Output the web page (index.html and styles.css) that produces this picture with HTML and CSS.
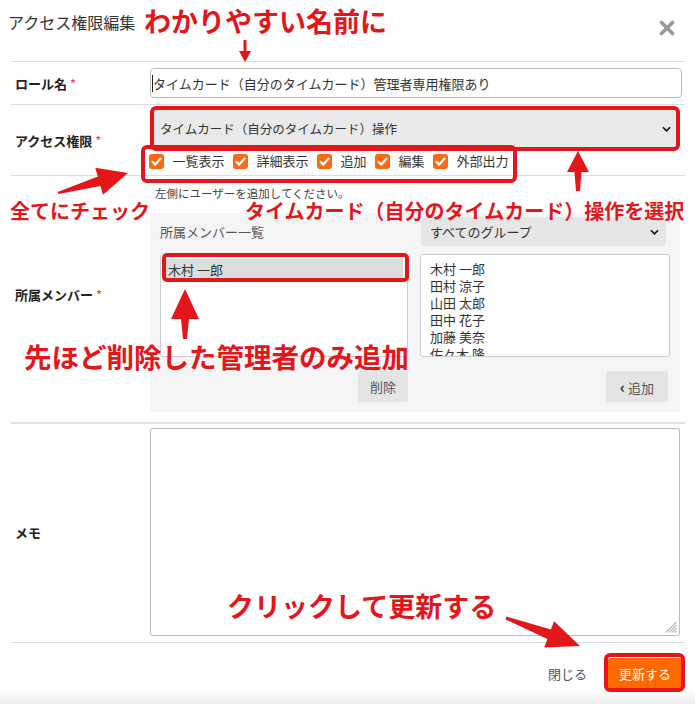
FILE: index.html
```html
<!DOCTYPE html>
<html lang="ja">
<head>
<meta charset="utf-8">
<title>アクセス権限編集</title>
<link rel="stylesheet" href="styles.css">
</head>
<body>
<div class="modal">
  <header class="header">
    <h1 class="title">アクセス権限編集</h1>
    <svg class="close" viewBox="0 0 16 16" width="16" height="16" aria-label="閉じる">
      <path d="M2.5 2.5 L13.5 13.5 M13.5 2.5 L2.5 13.5" stroke="#999" stroke-width="3.6" stroke-linecap="round" fill="none"/>
    </svg>
  </header>

  <div class="form">
    <div class="row row-name">
      <div class="label">ロール名 <span class="req">*</span></div>
      <div class="control">
        <div class="input"><span class="caret"></span>タイムカード（自分のタイムカード）管理者専用権限あり</div>
      </div>
    </div>

    <div class="row row-access">
      <div class="label">アクセス権限 <span class="req">*</span></div>
      <div class="control">
        <div class="select select-main">
          <span>タイムカード（自分のタイムカード）操作</span>
          <svg class="chev" viewBox="0 0 10 6" width="9" height="6"><path d="M1 1 L5 5 L9 1" stroke="#111" stroke-width="1.8" fill="none"/></svg>
        </div>
        <div class="checks">
          <span class="cb"><svg viewBox="0 0 15 15" width="15" height="15"><path d="M3.5 7.8 L6.3 10.6 L11.6 4.6" stroke="#fff" stroke-width="2.2" fill="none" stroke-linecap="round" stroke-linejoin="round"/></svg></span><span class="cb-label">一覧表示</span>
          <span class="cb"><svg viewBox="0 0 15 15" width="15" height="15"><path d="M3.5 7.8 L6.3 10.6 L11.6 4.6" stroke="#fff" stroke-width="2.2" fill="none" stroke-linecap="round" stroke-linejoin="round"/></svg></span><span class="cb-label">詳細表示</span>
          <span class="cb"><svg viewBox="0 0 15 15" width="15" height="15"><path d="M3.5 7.8 L6.3 10.6 L11.6 4.6" stroke="#fff" stroke-width="2.2" fill="none" stroke-linecap="round" stroke-linejoin="round"/></svg></span><span class="cb-label">追加</span>
          <span class="cb"><svg viewBox="0 0 15 15" width="15" height="15"><path d="M3.5 7.8 L6.3 10.6 L11.6 4.6" stroke="#fff" stroke-width="2.2" fill="none" stroke-linecap="round" stroke-linejoin="round"/></svg></span><span class="cb-label">編集</span>
          <span class="cb"><svg viewBox="0 0 15 15" width="15" height="15"><path d="M3.5 7.8 L6.3 10.6 L11.6 4.6" stroke="#fff" stroke-width="2.2" fill="none" stroke-linecap="round" stroke-linejoin="round"/></svg></span><span class="cb-label">外部出力</span>
        </div>
      </div>
    </div>

    <div class="row row-members">
      <div class="label">所属メンバー <span class="req">*</span></div>
      <div class="control">
        <p class="hint">左側にユーザーを追加してください。</p>
        <div class="panel">
          <div class="col">
            <div class="col-head">所属メンバー一覧</div>
            <div class="list list-left">
              <div class="item-selected">木村 一郎</div>
            </div>
            <div class="btn-row"><button class="btn btn-del">削除</button></div>
          </div>
          <div class="col">
            <div class="select select-group">
              <span>すべてのグループ</span>
              <svg class="chev" viewBox="0 0 10 6" width="9" height="6"><path d="M1 1 L5 5 L9 1" stroke="#111" stroke-width="1.8" fill="none"/></svg>
            </div>
            <div class="list list-all">
              <div>木村 一郎</div>
              <div>田村 涼子</div>
              <div>山田 太郎</div>
              <div>田中 花子</div>
              <div>加藤 美奈</div>
              <div>佐々木 隆</div>
            </div>
            <div class="btn-row"><button class="btn btn-add"><span class="lt">‹</span> 追加</button></div>
          </div>
        </div>
      </div>
    </div>

    <div class="row row-memo">
      <div class="label">メモ</div>
      <div class="control">
        <div class="textarea">
          <svg class="grip" viewBox="0 0 12 12" width="12" height="12">
            <path d="M11.5 1 L1 11.5 M11.5 4 L4 11.5 M11.5 7 L7 11.5 M11.5 10 L10 11.5" stroke="#888" stroke-width="1" fill="none"/>
          </svg>
        </div>
      </div>
    </div>
  </div>

  <footer class="footer">
    <span class="close-link">閉じる</span>
    <button class="btn-primary">更新する</button>
  </footer>

  <!-- annotation overlay -->
  <div class="hl hl-select"></div>
  <div class="hl hl-checks"></div>
  <div class="hl hl-item"></div>
  <div class="hl hl-btn"></div>

  <div class="note note-name">わかりやすい名前に</div>
  <div class="note note-check">全てにチェック</div>
  <div class="note note-op">タイムカード（自分のタイムカード）操作を選択</div>
  <div class="note note-member">先ほど削除した管理者のみ追加</div>
  <div class="note note-click">クリックして更新する</div>

  <svg class="arrows" viewBox="0 0 695 704" width="695" height="704">
    <polygon points="243.5,40 243.5,51 239,51 245,62 251,51 246.5,51 246.5,40"/>
    <polygon points="57.7,192 97.8,176.4 95.3,167.8 128,173 103,194.7 100.5,186.1 58.3,194"/>
    <polygon points="576,191 574.5,172 567,172 578,151 589,172 581.5,172 580,191"/>
    <polygon points="183,339 181,319 171,319 185,289 199,319 189,319 187,339"/>
    <polygon points="506.5,616.6 550.9,629.6 554.1,621.2 580,646 544.2,647.4 547.4,639 505.5,619.4"/>
  </svg>
</div>
</body>
</html>
```

FILE: styles.css
```css
* { box-sizing: border-box; }

html, body {
  margin: 0;
  padding: 0;
}

body {
  font-family: "Noto Sans CJK JP", "Noto Sans", sans-serif;
  color: #333;
  background: #fff;
  width: 695px;
  height: 704px;
  overflow: hidden;
}

.modal {
  position: relative;
  width: 695px;
  height: 704px;
}

/* header */
.header {
  height: 61px;
  display: flex;
  align-items: flex-start;
  padding: 11px 20px 0 8px;
}

.title {
  margin: 0;
  font-size: 16px;
  font-weight: 400;
  line-height: 22px;
  color: #333;
}

.close {
  margin-left: auto;
  margin-top: 9px;
}

/* form rows */
.form {
  margin: 0 10px 0 11px;
}

.row {
  display: grid;
  grid-template-columns: 139px 1fr;
  border-top: 1px solid #ddd;
}

.label {
  align-self: center;
  padding-left: 4px;
  font-size: 13px;
  font-weight: 700;
  color: #222;
}

.req {
  color: #e8443a;
  font-weight: 400;
}

.row-name { padding: 6px 0 6px; }

.input {
  width: 532px;
  height: 30px;
  border: 1px solid #bbb;
  border-radius: 4px;
  font-size: 13px;
  padding-left: 1px;
  white-space: nowrap;
  display: flex;
  align-items: center;
  color: #333;
}

.caret {
  width: 1px;
  height: 17px;
  background: #222;
}

.row-access { padding: 5px 0 5px; }

.select {
  display: flex;
  align-items: center;
  justify-content: space-between;
  background: #e9e9e9;
  border-radius: 4px;
  color: #333;
  white-space: nowrap;
}

.select-main {
  margin-left: 3px;
  width: 524px;
  height: 37px;
  padding: 0 6px 0 7px;
  font-size: 12.5px;
}

.checks {
  display: flex;
  align-items: center;
  height: 18px;
  margin-top: 5px;
  margin-left: -1px;
}

.cb {
  width: 15px;
  height: 15px;
  border-radius: 3px;
  background: #fa6a14;
  display: flex;
  margin-right: 8.5px;
}

.cb-label {
  font-size: 13px;
  line-height: 18px;
  margin-right: 8.5px;
  color: #333;
}

/* members */
.row-members { padding-bottom: 10px; }

.hint {
  margin: 0;
  padding: 9px 0 0 5px;
  font-size: 11.5px;
  line-height: 16px;
  color: #444;
}

.panel {
  margin-top: 12px;
  width: 530px;
  background: #f5f5f5;
  padding: 4px 10px 10px;
  display: grid;
  grid-template-columns: 248px 250px;
  column-gap: 12px;
}

.col {
  display: flex;
  flex-direction: column;
}

.col-head {
  height: 29px;
  display: flex;
  align-items: center;
  font-size: 13px;
  color: #555;
}

.select-group {
  margin-left: 1px;
  width: 245px;
  height: 29px;
  padding: 0 7px 0 9px;
  font-size: 13px;
  background: #e6e6e6;
}

.list {
  margin-top: 8px;
  height: 103px;
  background: #fff;
  border: 1px solid #ccc;
  border-radius: 3px;
  overflow: hidden;
}

.list-left { padding: 4px; }

.item-selected {
  background: #ddd;
  height: 21px;
  line-height: 21px;
  padding-left: 3px;
  font-size: 13px;
  color: #333;
}

.list-all {
  padding: 5px 9px;
  font-size: 13px;
  line-height: 17px;
  color: #333;
}

.btn-row {
  display: flex;
  justify-content: flex-end;
  margin-top: 14px;
}

.btn {
  height: 31px;
  border: none;
  border-radius: 3px;
  background: #e4e4e4;
  font-family: inherit;
  font-size: 13px;
  color: #555;
  padding: 0;
}

.btn-del { width: 50px; }

.btn-add {
  width: 62px;
  margin-right: 2px;
}

.lt {
  font-weight: 700;
  color: #222;
  font-size: 15px;
}

/* memo */
.row-memo {
  border-top: 2px solid #e2e2e2;
  border-bottom: 1px solid #ddd;
  padding: 4px 0 6px;
}

.textarea {
  position: relative;
  width: 530px;
  height: 208px;
  border: 1px solid #bbb;
  border-radius: 3px;
  background: #fff;
}

.grip {
  position: absolute;
  right: 2px;
  bottom: 2px;
}

/* footer */
.footer {
  height: 61px;
  display: flex;
  justify-content: flex-end;
  align-items: center;
  padding-right: 13px;
  background: linear-gradient(#fff 46px, #ededed);
}

.close-link {
  font-size: 13px;
  color: #555;
  margin-right: 21px;
}

.btn-primary {
  width: 74px;
  height: 31px;
  background: #ff6a00;
  color: #fff;
  border: none;
  border-radius: 3px;
  font-family: inherit;
  font-size: 13px;
  padding: 0;
}

/* annotations (overlay) */
.hl {
  position: absolute;
  border: 4px solid #e5161a;
  border-radius: 6px;
}

.hl-select { left: 150px; top: 106px; width: 530px; height: 45px; }
.hl-checks { left: 141px; top: 145px; width: 376px; height: 38px; }
.hl-item { left: 162px; top: 253px; width: 247px; height: 29px; border-radius: 5px; }
.hl-btn { left: 604px; top: 653px; width: 81px; height: 39px; }

.note {
  position: absolute;
  color: #e5161a;
  font-weight: 700;
  line-height: 1;
  white-space: nowrap;
}

.note-name { left: 144px; top: 7px; font-size: 27px; }
.note-check { left: 10px; top: 201px; font-size: 20px; }
.note-op { left: 245px; top: 201px; font-size: 20px; }
.note-member { left: 24px; top: 343px; font-size: 27.5px; }
.note-click { left: 227px; top: 592px; font-size: 27px; }

.arrows {
  position: absolute;
  left: 0;
  top: 0;
  pointer-events: none;
  fill: #e5161a;
}
```
